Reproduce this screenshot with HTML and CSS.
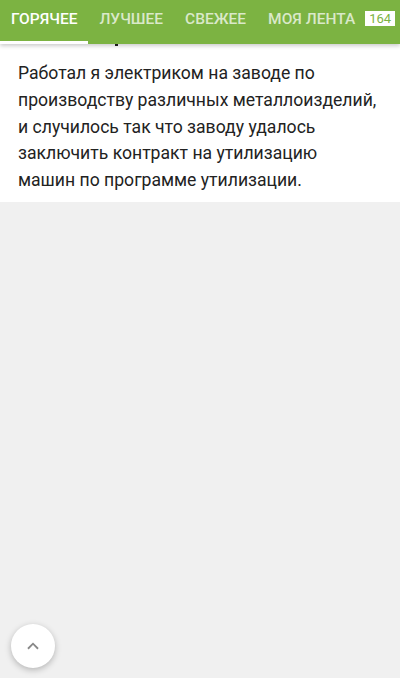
FILE: index.html
```html
<!DOCTYPE html>
<html lang="ru">
<head>
    <meta charset="UTF-8">
    <meta name="viewport" content="width=device-width, initial-scale=1.0">
    <title>Лента</title>
    <link rel="stylesheet" href="styles.css">
</head>
<body>

<header class="tabs">
    <a class="tab active" href="#">Горячее</a>
    <a class="tab" href="#">Лучшее</a>
    <a class="tab" href="#">Свежее</a>
    <a class="tab" href="#">Моя лента <span class="badge">164</span></a>
</header>

<main class="feed">
    <article class="story">
        <span class="story-dot"></span>
        <p class="story-text">Работал я электриком на заводе по производству различных металлоизделий, и случилось так что заводу удалось заключить контракт на утилизацию<br>машин по программе утилизации.</p>
    </article>
</main>

<button class="to-top" aria-label="Наверх">
    <svg xmlns="http://www.w3.org/2000/svg" viewBox="0 0 24 24">
        <path d="M6.5 15l5.5-5.5 5.5 5.5" />
    </svg>
</button>

</body>
</html>
```

FILE: styles.css
```css
* {
    margin: 0;
    padding: 0;
    box-sizing: border-box;
}
body {
    font-family: Roboto, "Noto Sans", sans-serif;
    background-color: #f0f0f0;
    height: 100vh;
    overflow: hidden;
}
.tabs {
    position: relative;
    z-index: 5;
    display: flex;
    align-items: stretch;
    height: 44px;
    background-color: #7cb342;
    box-shadow: 0 2px 4px rgba(0, 0, 0, 0.2);
    white-space: nowrap;
}
.tab {
    display: flex;
    align-items: center;
    padding: 0 11px 4px;
    color: rgba(255, 255, 255, 0.72);
    text-decoration: none;
    text-transform: uppercase;
    font-size: 15.5px;
    font-weight: 500;
    border-bottom: 3px solid transparent;
}
.tab.active {
    color: #fff;
    border-bottom-color: #fff;
}
.badge {
    margin-left: 10px;
    padding: 0 4px;
    background: #fff;
    color: #7cb342;
    font-size: 13px;
    font-weight: 400;
    line-height: 15px;
}
.story {
    position: relative;
    background: #fff;
    padding: 16px 16px 8px 18px;
}
.story-dot {
    position: absolute;
    top: 0;
    left: 115px;
    width: 3px;
    height: 2px;
    background: #222;
}
.story-text {
    font-size: 17.6px;
    line-height: 26.8px;
    color: #222;
}
.to-top {
    position: fixed;
    left: 11px;
    bottom: 10px;
    width: 44px;
    height: 44px;
    border: none;
    border-radius: 50%;
    background: #fff;
    box-shadow: 0 2px 6px rgba(0, 0, 0, 0.25);
    display: flex;
    justify-content: center;
    align-items: center;
}
.to-top svg {
    width: 22px;
    height: 22px;
    fill: none;
    stroke: #888;
    stroke-width: 2;
}
```
